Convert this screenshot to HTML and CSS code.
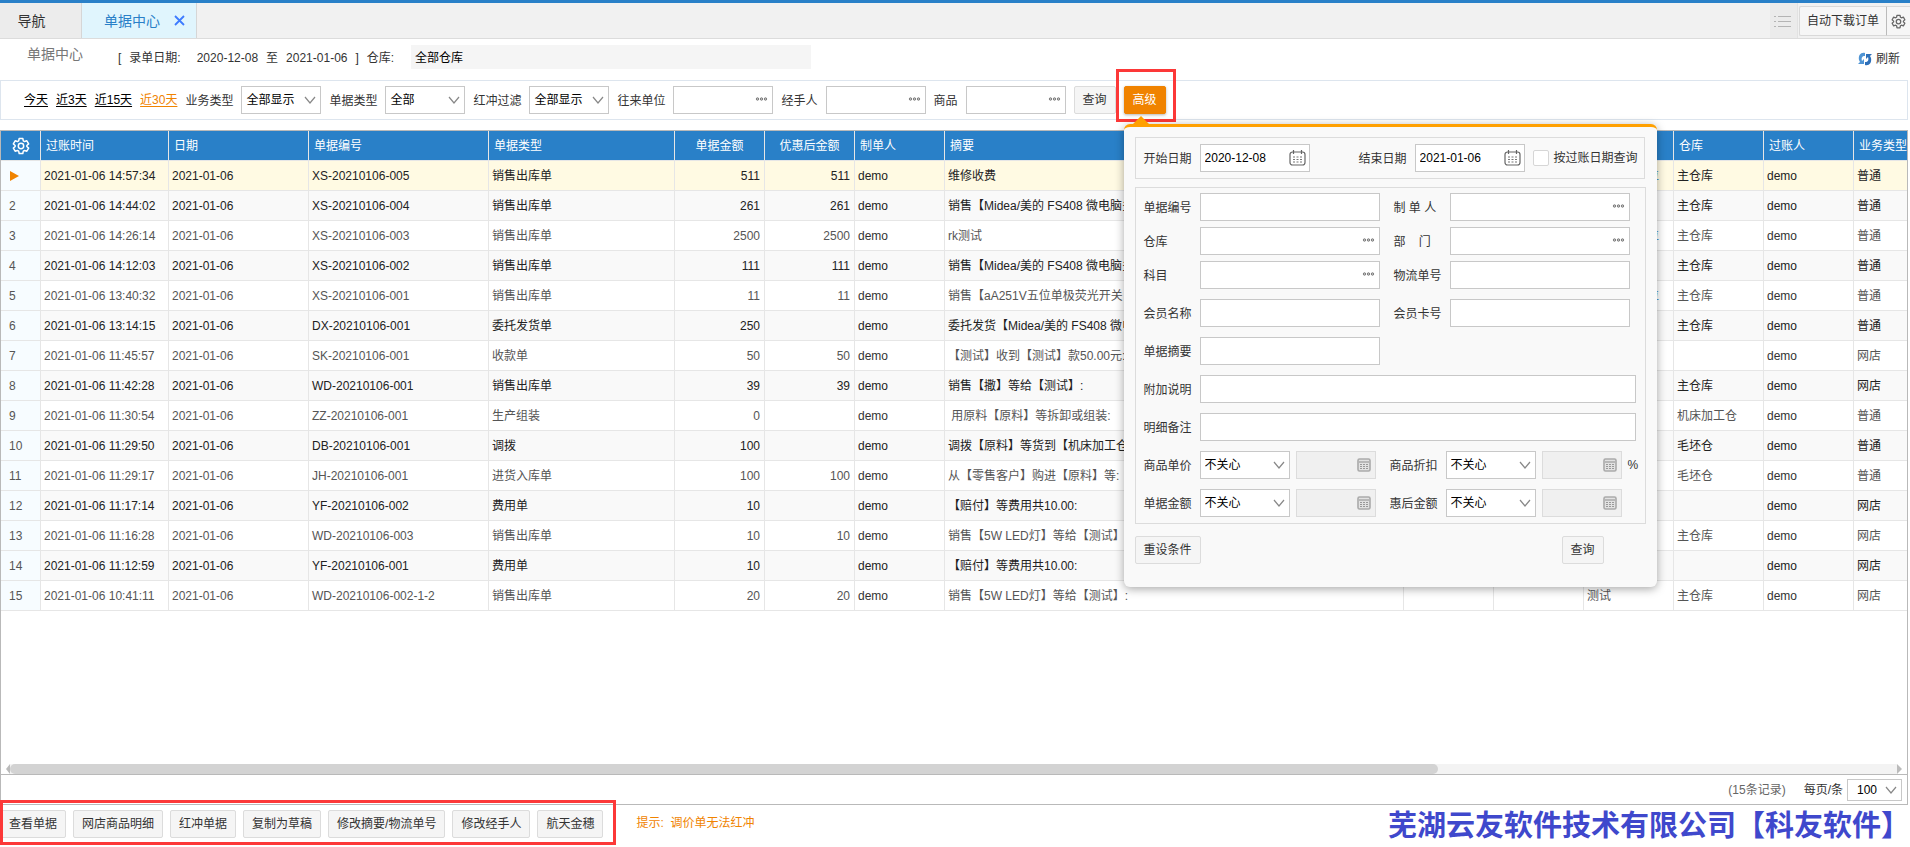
FILE: index.html
```html
<!DOCTYPE html>
<html lang="zh-CN">
<head>
<meta charset="utf-8">
<title>单据中心</title>
<link rel="stylesheet" href="styles.css">
</head>
<body>
<svg class="sprite" aria-hidden="true">
  <symbol id="chev" viewBox="0 0 12 8"><path d="M1 1l5 6 5-6" fill="none" stroke="#888" stroke-width="1.2"/></symbol>
  <symbol id="dots" viewBox="0 0 14 6"><g fill="#ccc" stroke="#777" stroke-width="1"><circle cx="2.5" cy="3" r="1.2"/><circle cx="6.5" cy="3" r="1.2"/><circle cx="10.5" cy="3" r="1.2"/></g></symbol>
  <symbol id="gear" viewBox="0 0 24 24"><path d="M9.6 2h4.8l.7 3.2 1.6.9 3.1-1 2.4 4.1-2.4 2.2v1.2l2.4 2.2-2.4 4.1-3.1-1-1.6.9-.7 3.2H9.6l-.7-3.2-1.6-.9-3.1 1-2.4-4.1 2.4-2.2v-1.2L1.800 9.200l2.400-4.100 3.100 1 1.600-.9z" fill="none" stroke="currentColor" stroke-width="2" stroke-linejoin="round"/><circle cx="12" cy="12" r="3.600" fill="none" stroke="currentColor" stroke-width="2"/></symbol>
  <symbol id="cal" viewBox="0 0 17 16"><rect x="1" y="2" width="15" height="13" rx="2.500" fill="none" stroke="#666" stroke-width="1.200"/><path d="M4.500 0v4M12.500 0v4" stroke="#666" stroke-width="1.200"/><path d="M4 7h2M7.500 7h2M11 7h2M4 9.500h2M7.500 9.500h2M11 9.500h2M4 12h2M7.500 12h2M11 12h2" stroke="#777" stroke-width="1.200"/></symbol>
  <symbol id="calc" viewBox="0 0 14 14"><rect x="1" y="1" width="12" height="12" rx="1.500" fill="#e2e2e2" stroke="#aaa" stroke-width="1.600"/><path d="M2 4h10" stroke="#aaa" stroke-width="1.500"/><path d="M3 6.500h2M6 6.500h2M9 6.500h2M3 8.500h2M6 8.500h2M9 8.500h2M3 10.500h2M6 10.500h2M9 10.500h2" stroke="#999" stroke-width="1.200"/></symbol>
</svg>

<header class="tabs">
  <button class="tab">导航</button>
  <button class="tab tab-active">单据中心
    <svg width="11" height="11" viewBox="0 0 11 11"><path d="M1 1l9 9M10 1l-9 9" stroke="#3d7bff" stroke-width="1.800"/></svg>
  </button>
  <div class="tabs-right">
    <button class="list-btn" aria-label="列表"><svg width="18" height="12" viewBox="0 0 18 12"><path d="M0 1.500h2M4 1.500h13M0 6.500h2M4 6.500h13M0 11.500h2M4 11.500h13" stroke="#b4b4b4"/></svg></button>
    <button class="dl-btn">自动下载订单</button>
    <button class="gear-btn" aria-label="设置"><svg width="15" height="15"><use href="#gear"/></svg></button>
  </div>
</header>

<section class="head">
  <h1>单据中心</h1>
  <div class="range"><span>[</span><span>录单日期:</span><span class="date">2020-12-08</span><span>至</span><span>2021-01-06</span><span>]</span><span>仓库:</span></div>
  <div class="store">全部仓库</div>
  <button class="refresh">
    <svg width="14" height="14" viewBox="0 0 14 14"><path d="M7 1C3 0 0 3 1 8l1 2-2 2h6V7L4 9C3 6 4 4 7 4z" fill="#4f94d4"/><path d="M7 13c4 1 7-2 6-7l-1-2 2-2H8v5l2-2c1 3 0 5-3 5z" fill="#2d6fb9"/></svg>
    刷新</button>
</section>

<form class="filter">
  <a href="#">今天</a><a href="#">近3天</a><a href="#">近15天</a><a href="#" class="on">近30天</a>
  <label for="biz">业务类型</label>
  <span class="field w80"><select id="biz"><option>全部显示</option></select><svg class="i-chev"><use href="#chev"/></svg></span>
  <label for="kind">单据类型</label>
  <span class="field w80"><select id="kind"><option>全部</option></select><svg class="i-chev"><use href="#chev"/></svg></span>
  <label for="red">红冲过滤</label>
  <span class="field w80"><select id="red"><option>全部显示</option></select><svg class="i-chev"><use href="#chev"/></svg></span>
  <label for="unit">往来单位</label>
  <span class="field w100"><input id="unit"><svg class="i-dots"><use href="#dots"/></svg></span>
  <label for="person">经手人</label>
  <span class="field w100"><input id="person"><svg class="i-dots"><use href="#dots"/></svg></span>
  <label for="goods">商品</label>
  <span class="field w100"><input id="goods"><svg class="i-dots"><use href="#dots"/></svg></span>
  <button type="button" class="btn">查询</button>
  <div class="adv">
    <button type="button" class="btn btn-orange">高级</button>
    <span class="mark mark-adv"></span>
    <div class="pop">
      <div class="box dates">
        <label for="d1">开始日期</label>
        <span class="field w110"><input id="d1" value="2020-12-08"><svg class="i-cal"><use href="#cal"/></svg></span>
        <label for="d2" class="d2">结束日期</label>
        <span class="field w110"><input id="d2" value="2021-01-06"><svg class="i-cal"><use href="#cal"/></svg></span>
        <input type="checkbox" id="bypost"><label for="bypost" class="cb">按过账日期查询</label>
      </div>
      <div class="box conds">
        <div class="tight">
          <div class="row">
            <label for="p1">单据编号</label><span class="field w180"><input id="p1"></span>
            <label for="p2" class="second">制 单 人</label><span class="field w180"><input id="p2"><svg class="i-dots"><use href="#dots"/></svg></span>
          </div>
          <div class="row">
            <label for="p3">仓库</label><span class="field w180"><input id="p3"><svg class="i-dots"><use href="#dots"/></svg></span>
            <label for="p4" class="second">部&nbsp;&nbsp;&nbsp; 门</label><span class="field w180"><input id="p4"><svg class="i-dots"><use href="#dots"/></svg></span>
          </div>
          <div class="row">
            <label for="p5">科目</label><span class="field w180"><input id="p5"><svg class="i-dots"><use href="#dots"/></svg></span>
            <label for="p6" class="second">物流单号</label><span class="field w180"><input id="p6"></span>
          </div>
        </div>
        <div class="row">
          <label for="p7">会员名称</label><span class="field w180"><input id="p7"></span>
          <label for="p8" class="second">会员卡号</label><span class="field w180"><input id="p8"></span>
        </div>
        <div class="row"><label for="p9">单据摘要</label><span class="field w180"><input id="p9"></span></div>
        <div class="row"><label for="p10">附加说明</label><span class="field grow"><input id="p10"></span></div>
        <div class="row"><label for="p11">明细备注</label><span class="field grow"><input id="p11"></span></div>
        <div class="row">
          <label for="q1">商品单价</label><span class="field w90"><select id="q1"><option>不关心</option></select><svg class="i-chev"><use href="#chev"/></svg></span>
          <span class="field w80 num"><input disabled aria-label="商品单价值"><svg class="i-calc"><use href="#calc"/></svg></span>
          <label for="q2" class="second">商品折扣</label><span class="field w90"><select id="q2"><option>不关心</option></select><svg class="i-chev"><use href="#chev"/></svg></span>
          <span class="field w80 num"><input disabled aria-label="商品折扣值"><svg class="i-calc"><use href="#calc"/></svg></span>
          <span class="pct">%</span>
        </div>
        <div class="row">
          <label for="q3">单据金额</label><span class="field w90"><select id="q3"><option>不关心</option></select><svg class="i-chev"><use href="#chev"/></svg></span>
          <span class="field w80 num"><input disabled aria-label="单据金额值"><svg class="i-calc"><use href="#calc"/></svg></span>
          <label for="q4" class="second">惠后金额</label><span class="field w90"><select id="q4"><option>不关心</option></select><svg class="i-chev"><use href="#chev"/></svg></span>
          <span class="field w80 num"><input disabled aria-label="惠后金额值"><svg class="i-calc"><use href="#calc"/></svg></span>
        </div>
      </div>
      <div class="pop-foot"><button type="button" class="btn">重设条件</button><button type="button" class="btn">查询</button></div>
    </div>
  </div>
</form>

<main class="grid">
  <table>
    <colgroup><col class="c40"><col class="c128"><col class="c140"><col class="c180"><col class="c186"><col class="c90"><col class="c90"><col class="c90"><col><col class="c90"><col class="c90"><col class="c90"><col class="c90"><col class="c90"><col class="c53"></colgroup>
    <thead><tr><th class="set"><svg width="18" height="18"><use href="#gear"/></svg></th><th>过账时间</th><th>日期</th><th>单据编号</th><th>单据类型</th><th class="mid">单据金额</th><th class="mid">优惠后金额</th><th>制单人</th><th>摘要</th><th></th><th></th><th></th><th>仓库</th><th>过账人</th><th>业务类型</th></tr></thead>
    <tbody>
      <tr class="sel"><td><svg width="11" height="10" viewBox="0 0 11 10"><path d="M1 0l9 5-9 5z" fill="#f08300"/></svg></td><td>2021-01-06 14:57:34</td><td>2021-01-06</td><td>XS-20210106-005</td><td>销售出库单</td><td>511</td><td>511</td><td>demo</td><td>维修收费</td><td></td><td></td><td><a href="#">芜湖测试单位</a></td><td>主仓库</td><td>demo</td><td>普通</td></tr>
      <tr><td>2</td><td>2021-01-06 14:44:02</td><td>2021-01-06</td><td>XS-20210106-004</td><td>销售出库单</td><td>261</td><td>261</td><td>demo</td><td>销售【Midea/美的 FS408 微电脑多</td><td></td><td></td><td></td><td>主仓库</td><td>demo</td><td>普通</td></tr>
      <tr><td>3</td><td>2021-01-06 14:26:14</td><td>2021-01-06</td><td>XS-20210106-003</td><td>销售出库单</td><td>2500</td><td>2500</td><td>demo</td><td>rk测试</td><td></td><td></td><td><a href="#">芜湖测试单位</a></td><td>主仓库</td><td>demo</td><td>普通</td></tr>
      <tr><td>4</td><td>2021-01-06 14:12:03</td><td>2021-01-06</td><td>XS-20210106-002</td><td>销售出库单</td><td>111</td><td>111</td><td>demo</td><td>销售【Midea/美的 FS408 微电脑多</td><td></td><td></td><td></td><td>主仓库</td><td>demo</td><td>普通</td></tr>
      <tr><td>5</td><td>2021-01-06 13:40:32</td><td>2021-01-06</td><td>XS-20210106-001</td><td>销售出库单</td><td>11</td><td>11</td><td>demo</td><td>销售【aA251V五位单极荧光开关</td><td></td><td></td><td><a href="#">芜湖测试单位</a></td><td>主仓库</td><td>demo</td><td>普通</td></tr>
      <tr><td>6</td><td>2021-01-06 13:14:15</td><td>2021-01-06</td><td>DX-20210106-001</td><td>委托发货单</td><td>250</td><td></td><td>demo</td><td>委托发货【Midea/美的 FS408 微电</td><td></td><td></td><td></td><td>主仓库</td><td>demo</td><td>普通</td></tr>
      <tr><td>7</td><td>2021-01-06 11:45:57</td><td>2021-01-06</td><td>SK-20210106-001</td><td>收款单</td><td>50</td><td>50</td><td>demo</td><td>【测试】收到【测试】款50.00元:</td><td></td><td></td><td></td><td></td><td>demo</td><td>网店</td></tr>
      <tr><td>8</td><td>2021-01-06 11:42:28</td><td>2021-01-06</td><td>WD-20210106-001</td><td>销售出库单</td><td>39</td><td>39</td><td>demo</td><td>销售【撒】等给【测试】:</td><td></td><td></td><td></td><td>主仓库</td><td>demo</td><td>网店</td></tr>
      <tr><td>9</td><td>2021-01-06 11:30:54</td><td>2021-01-06</td><td>ZZ-20210106-001</td><td>生产组装</td><td>0</td><td></td><td>demo</td><td>&nbsp;用原料【原料】等拆卸或组装:</td><td></td><td></td><td></td><td>机床加工仓</td><td>demo</td><td>普通</td></tr>
      <tr><td>10</td><td>2021-01-06 11:29:50</td><td>2021-01-06</td><td>DB-20210106-001</td><td>调拨</td><td>100</td><td></td><td>demo</td><td>调拨【原料】等货到【机床加工仓</td><td></td><td></td><td></td><td>毛坯仓</td><td>demo</td><td>普通</td></tr>
      <tr><td>11</td><td>2021-01-06 11:29:17</td><td>2021-01-06</td><td>JH-20210106-001</td><td>进货入库单</td><td>100</td><td>100</td><td>demo</td><td>从【零售客户】购进【原料】等:</td><td></td><td></td><td></td><td>毛坯仓</td><td>demo</td><td>普通</td></tr>
      <tr><td>12</td><td>2021-01-06 11:17:14</td><td>2021-01-06</td><td>YF-20210106-002</td><td>费用单</td><td>10</td><td></td><td>demo</td><td>【赔付】等费用共10.00:</td><td></td><td></td><td></td><td></td><td>demo</td><td>网店</td></tr>
      <tr><td>13</td><td>2021-01-06 11:16:28</td><td>2021-01-06</td><td>WD-20210106-003</td><td>销售出库单</td><td>10</td><td>10</td><td>demo</td><td>销售【5W LED灯】等给【测试】:</td><td></td><td></td><td></td><td>主仓库</td><td>demo</td><td>网店</td></tr>
      <tr><td>14</td><td>2021-01-06 11:12:59</td><td>2021-01-06</td><td>YF-20210106-001</td><td>费用单</td><td>10</td><td></td><td>demo</td><td>【赔付】等费用共10.00:</td><td></td><td></td><td></td><td></td><td>demo</td><td>网店</td></tr>
      <tr><td>15</td><td>2021-01-06 10:41:11</td><td>2021-01-06</td><td>WD-20210106-002-1-2</td><td>销售出库单</td><td>20</td><td>20</td><td>demo</td><td>销售【5W LED灯】等给【测试】:</td><td></td><td></td><td>测试</td><td>主仓库</td><td>demo</td><td>网店</td></tr>
    </tbody>
  </table>
  <div class="scroll">
    <svg width="4" height="10" viewBox="0 0 4 10"><path d="M4 0v10L0 5z" fill="#bbb"/></svg>
    <div class="track"><div class="thumb" style="width:75.7%"></div></div>
    <svg width="5" height="10" viewBox="0 0 5 10"><path d="M0 0v10l5-5z" fill="#bbb"/></svg>
  </div>
  <div class="pager">
    <span class="count">(15条记录)</span>
    <label for="size">每页/条</label>
    <span class="field page"><select id="size"><option>100</option></select><svg class="i-chev"><use href="#chev"/></svg></span>
  </div>
</main>

<footer class="foot">
  <div class="actions">
    <button class="btn">查看单据</button><button class="btn">网店商品明细</button><button class="btn">红冲单据</button><button class="btn">复制为草稿</button><button class="btn">修改摘要/物流单号</button><button class="btn">修改经手人</button><button class="btn">航天金穗</button>
    <span class="mark mark-act"></span>
  </div>
  <span class="tip">提示:&nbsp; 调价单无法红冲</span>
  <strong class="company">芜湖云友软件技术有限公司【科友软件】</strong>
</footer>
</body>
</html>
```
FILE: styles.css
```css
* { box-sizing: border-box; }
body {
  margin: 0;
  min-height: 100vh;
  display: flex;
  flex-direction: column;
  background: #fff;
}
body, input, select, button {
  font-family: "Liberation Sans", "Noto Sans CJK SC", sans-serif;
  font-size: 12px;
  line-height: 18px;
  color: #333;
}
button { padding: 0; border: 0; background: none; white-space: nowrap; }
svg { display: block; }
.sprite { position: absolute; width: 0; height: 0; }

.tabs {
  display: flex;
  height: 39px;
  border-top: 3px solid #2980c8;
  border-bottom: 1px solid #dcdcdc;
  background: #f1f1f1;
}
.tab { width: 82px; padding-right: 18px; font-size: 14px; background: #ececec; border-right: 1px solid #d6d6d6; }
.tab-active {
  display: flex;
  align-items: center;
  gap: 14px;
  width: 115px;
  padding: 0 0 0 22px;
  color: #2980c8;
  background: #e0f5fd;
}
.tabs-right { display: flex; margin-left: auto; }
.list-btn { width: 28px; padding-left: 4px; background: #ebebeb; border-right: 1px solid #e2e2e2; }
.dl-btn, .gear-btn { height: 30px; margin-top: 3px; border: 1px solid #d9d9d9; background: #f6f6f6; }
.dl-btn { width: 88px; margin-left: 1px; border-right-color: #bbb; border-radius: 2px 0 0 2px; }
.gear-btn { width: 23px; padding-left: 4px; border-width: 1px 0; color: #666; }

.head { display: flex; align-items: flex-start; height: 41px; padding: 6px 10px 0 27px; }
h1 { margin: 0; width: 91px; font-size: 14px; font-weight: 400; color: #777; }
.range { display: flex; gap: 8px; width: 293px; padding-top: 4px; }
.range .date { margin-left: 8px; }
.store { width: 400px; height: 24px; padding: 4px; color: #000; background: #f5f5f5; }
.refresh { display: flex; align-items: center; gap: 4px; margin: 5px 0 0 auto; }

.filter {
  display: flex;
  align-items: center;
  gap: 8px;
  height: 40px;
  margin-right: 2px;
  padding-left: 23px;
  border: 1px solid #dde5ee;
  white-space: nowrap;
}
.filter > label, .row label, .dates label { flex: none; padding-top: 2px; }
.filter > a { color: #000; text-underline-offset: 2px; }
.filter > a.on { color: #f08300; }

.field { position: relative; display: block; flex: none; height: 28px; }
.field input, .field select {
  display: block;
  width: 100%;
  height: 100%;
  margin: 0;
  padding: 0 4px;
  border: 1px solid #c8c8c8;
  border-radius: 0;
  background: #fff;
  color: #000;
  appearance: none;
}
.field svg { position: absolute; pointer-events: none; }
.field .i-chev { width: 12px; height: 8px; right: 5px; top: 10px; }
.field .i-dots { width: 14px; height: 6px; right: 4px; top: 10px; }
.field .i-cal { width: 17px; height: 16px; right: 4px; top: 6px; }
.field .i-calc { width: 14px; height: 14px; right: 5px; top: 7px; }
.w80 { width: 80px; }
.w90 { width: 90px; }
.w100 { width: 100px; }
.w110 { width: 110px; }
.w180 { width: 180px; }
.field.grow { flex: 1; }
.num input { background: #f0f0f0; border-color: #dcdcdc; }

.btn { height: 28px; padding: 0 8px; border: 1px solid #dcdcdc; border-radius: 2px; background: #f5f5f5; }
.btn-orange { border-color: #f08300; background: #f08300; color: #fff; box-shadow: 0 1px 3px rgba(0,0,0,.3); }
.adv { position: relative; }
.mark { position: absolute; border: 3px solid #fc3838; pointer-events: none; }
.mark-adv { left: -8px; top: -17px; width: 60px; height: 53px; }

.pop {
  position: absolute;
  z-index: 2;
  left: 0;
  top: 38px;
  width: 533px;
  padding: 10px 10px 23px 11px;
  border-top: 3px solid #ffa000;
  border-radius: 6px;
  background: #f9f9f9;
  box-shadow: 0 2px 10px rgba(0,0,0,.35);
}
.pop::before {
  content: "";
  position: absolute;
  left: 9px;
  top: -11px;
  border: 8px solid transparent;
  border-top: 0;
  border-bottom-color: #ffa000;
}
.box { border: 1px solid #dcdcdc; }
.dates { display: flex; align-items: center; height: 42px; margin-right: 2px; padding-left: 8px; }
.dates label { width: 56px; }
.dates .d2 { margin-left: 49px; }
.dates .cb { width: auto; padding-top: 0; }
.dates input[type="checkbox"] { flex: none; width: 16px; height: 16px; margin: 0 5px 0 8px; appearance: none; border: 1px solid #d6d6d6; border-radius: 2px; background: #fff; }
.conds { display: flex; flex-direction: column; gap: 10px; margin: 8px 1px 0 0; padding: 5px 9px 6px 8px; }
.tight { display: flex; flex-direction: column; gap: 6px; }
.row { display: flex; align-items: center; }
.row label { width: 56px; }
.row .second { margin-left: 14px; }
.num, .pct { margin-left: 6px; }
.pop-foot { display: flex; justify-content: space-between; margin: 12px 43px 0 0; }

.grid {
  display: flex;
  flex: 1;
  flex-direction: column;
  margin: 10px 2px 0 0;
  border: 1px solid #b9b9b9;
}
table { width: 100%; table-layout: fixed; border-collapse: separate; border-spacing: 0; }
.c40 { width: 40px; }
.c53 { width: 53px; }
.c90 { width: 90px; }
.c128 { width: 128px; }
.c140 { width: 140px; }
.c180 { width: 180px; }
.c186 { width: 186px; }
th, td {
  height: 30px;
  padding: 0 4px 0 3px;
  border-right: 1px solid #e6e6e6;
  border-bottom: 1px solid #e6e6e6;
  text-align: left;
  white-space: nowrap;
  overflow: hidden;
}
th { padding: 0 0 0 5px; font-weight: 400; color: #fff; background: #2980c8; }
th:last-child, td:last-child { border-right: 0; }
th.mid { padding: 0; text-align: center; }
th.set { padding-left: 11px; }
td { color: #555; }
td:nth-child(6), td:nth-child(7) { text-align: right; }
td:nth-child(8), td:nth-child(14) { color: #333; }
tr:nth-child(even) td { color: #222; background: #f9f9f9; }
tr.sel td { color: #222; background: #fffae3; }
tbody tr td:first-child, tbody tr:nth-child(even) td:first-child { padding-left: 8px; color: #555; background: #f7fcff; }
td a { color: #2980c8; text-decoration: none; }

.scroll { display: flex; align-items: center; margin: auto 5px 0; }
.track { flex: 1; height: 10px; background: #f3f3f3; }
.thumb { height: 10px; border-radius: 5px; background: #d3d3d3; }
.pager {
  display: flex;
  align-items: center;
  justify-content: flex-end;
  height: 30px;
  padding-right: 5px;
  border-top: 1px solid #b9b9b9;
}
.count { margin-right: 18px; color: #666; }
.page { width: 55px; height: 22px; margin-left: 4px; }
.page select { padding-left: 9px; }
.field.page .i-chev { top: 7px; }

.foot { display: flex; align-items: flex-start; height: 42px; padding-top: 5px; white-space: nowrap; }
.actions { position: relative; display: flex; gap: 7px; }
.mark-act { left: 0; top: -10px; width: 616px; height: 45px; }
.tip { margin: 4px 0 0 33px; color: #f08300; }
.company { margin-left: auto; font-size: 29px; font-weight: 700; line-height: 32px; color: #3f48cc; }
```
